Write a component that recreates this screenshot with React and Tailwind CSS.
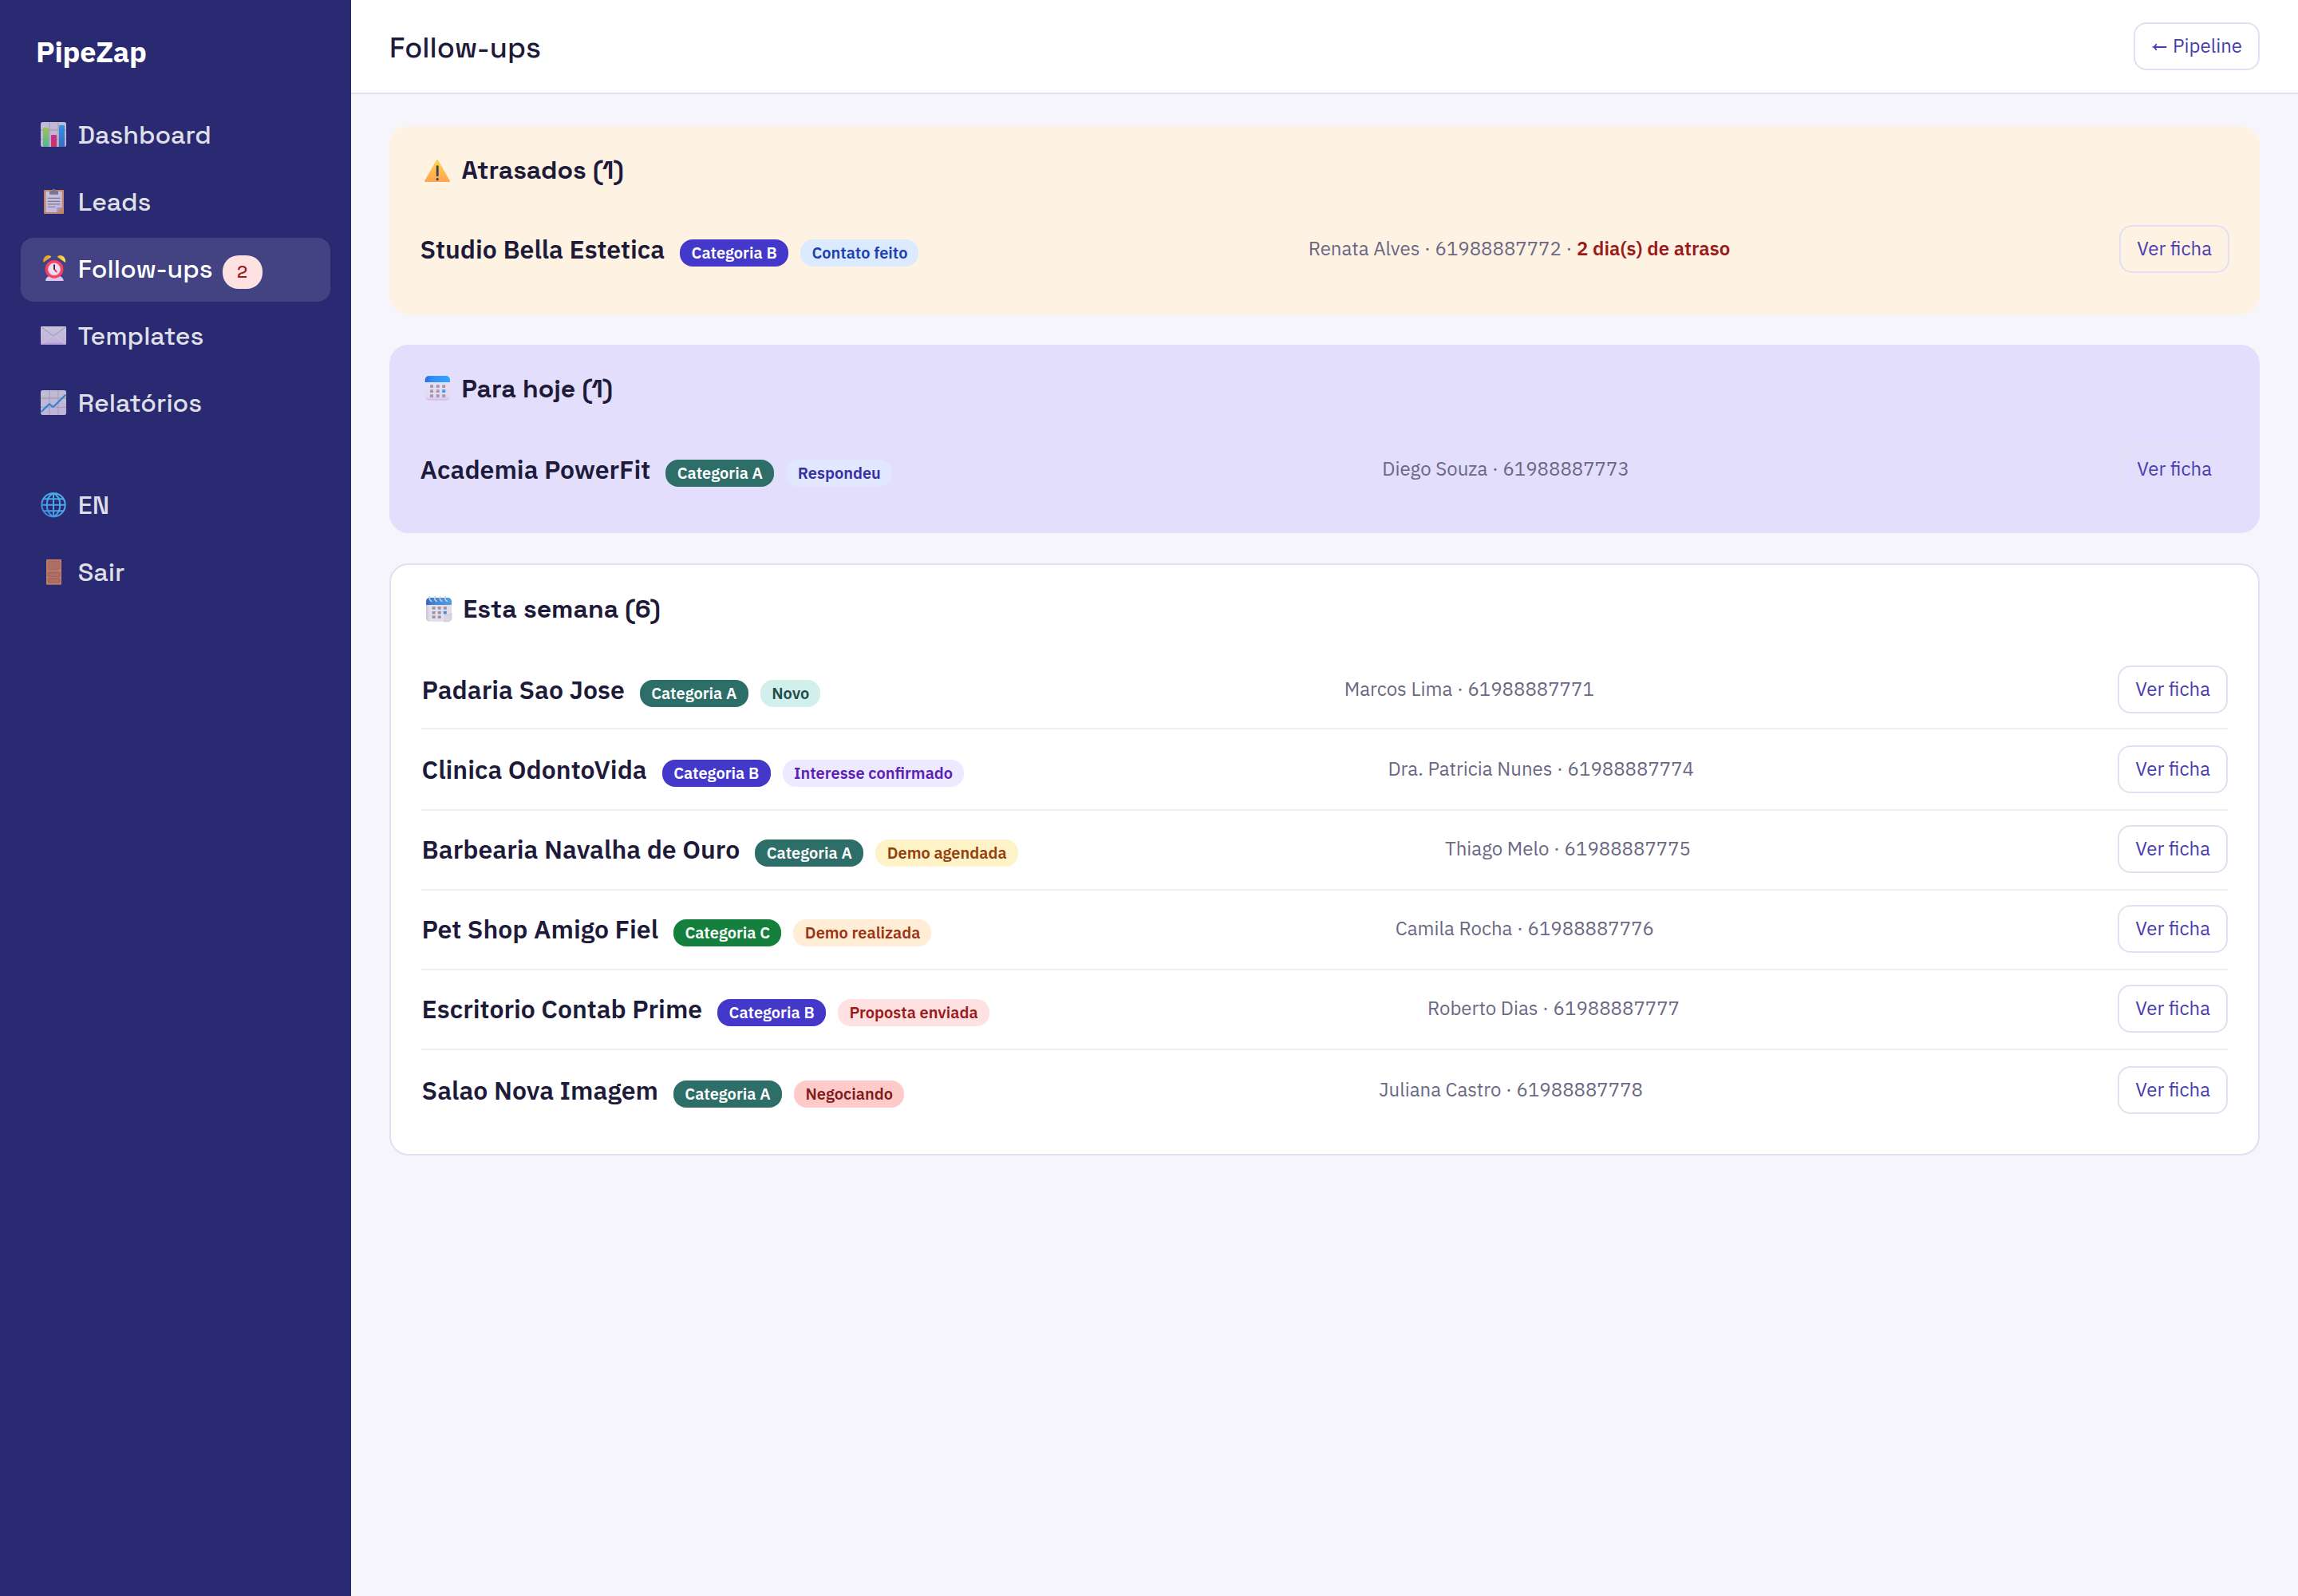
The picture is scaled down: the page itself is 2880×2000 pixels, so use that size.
function Svg({ children }) {
  return (
    <svg viewBox="0 0 32 32" className="size-8 shrink-0 overflow-visible" fill="none">
      {children}
    </svg>
  );
}

function Sheet() {
  return (
    <>
      <defs>
        <linearGradient id="sheet" x1="0" y1="0" x2="0" y2="1">
          <stop offset="0" stopColor="#dcd7e2" />
          <stop offset="1" stopColor="#dccbec" />
        </linearGradient>
      </defs>
      <rect width="32" height="31" rx="2.5" fill="url(#sheet)" />
      <path d="M11 0v31M22 0v31M0 10h32M0 21.300h32" stroke="#bdb5cb" strokeWidth="1.300" />
    </>
  );
}

function BarChartIcon() {
  return (
    <Svg>
      <Sheet />
      <defs>
        <linearGradient id="bar-green" x1="0" y1="0" x2="0" y2="1">
          <stop offset="0" stopColor="#b3dc4e" />
          <stop offset="1" stopColor="#52d39b" />
        </linearGradient>
        <linearGradient id="bar-pink" x1="0" y1="0" x2="0" y2="1">
          <stop offset="0" stopColor="#df2f92" />
          <stop offset="1" stopColor="#e23a63" />
        </linearGradient>
        <linearGradient id="bar-blue" x1="0" y1="0" x2="0" y2="1">
          <stop offset="0" stopColor="#2fa8f6" />
          <stop offset="1" stopColor="#3d78cf" />
        </linearGradient>
      </defs>
      <path d="M3 31V8a1 1 0 0 1 1-1h5a1 1 0 0 1 1 1v23z" fill="url(#bar-green)" />
      <path d="M13 31V17a1 1 0 0 1 1-1h5a1 1 0 0 1 1 1v14z" fill="url(#bar-pink)" />
      <path d="M23 31V5a1 1 0 0 1 1-1h5a1 1 0 0 1 1 1v26z" fill="url(#bar-blue)" />
    </Svg>
  );
}

function ClipboardIcon() {
  return (
    <Svg>
      <defs>
        <linearGradient id="paper" x1="0" y1="0" x2="1" y2="1">
          <stop offset="0" stopColor="#e6e0ee" />
          <stop offset="1" stopColor="#decdf0" />
        </linearGradient>
      </defs>
      <rect x="4" y="1" width="25" height="30" rx="1" fill="#e0976a" />
      <path d="M6.500 3h20.300v20l-6.500 6H6.500z" fill="url(#paper)" />
      <path d="M20.300 29v-5a1 1 0 0 1 1-1h5.500z" fill="#b9a6cd" />
      <path d="M8.800 11.300h15.400M8.800 15.300h15.400M8.800 18.800h15.400" stroke="#8b8599" strokeWidth="1.200" />
      <path d="M8.800 22.300h9.800" stroke="#a9a0b8" strokeWidth="1.600" />
      <path d="M11 3.500a1.500 1.500 0 0 1 1.500-1.500h1.700a2.200 2.200 0 0 1 4.400 0h1.900a1.500 1.500 0 0 1 1.500 1.500v3.300H11z" fill="#8b8394" />
    </Svg>
  );
}

function ClockIcon() {
  return (
    <Svg>
      <defs>
        <linearGradient id="bell-left" x1="0" y1="0" x2="1" y2="0">
          <stop offset="0" stopColor="#d99a2b" />
          <stop offset="1" stopColor="#ffb43c" />
        </linearGradient>
        <linearGradient id="bell-right" x1="0" y1="0" x2="1" y2="0">
          <stop offset="0" stopColor="#f0a52c" />
          <stop offset="1" stopColor="#ffee58" />
        </linearGradient>
        <radialGradient id="dial">
          <stop offset="0" stopColor="#f6eefa" />
          <stop offset="1" stopColor="#e6d2f0" />
        </radialGradient>
      </defs>
      <path d="M6 31c0-3 2.500-6 6-6h10.500c3.500 0 6.200 3 6.200 6z" fill="#dcc6f2" />
      <path d="M3.200 8C2.300 3 5.500-1 9.500-1c2 0 3.300.9 3.800 2z" fill="url(#bell-left)" />
      <path d="M30.800 8c.9-5-2.300-9-6.300-9-2 0-3.300.9-3.800 2z" fill="url(#bell-right)" />
      <circle cx="17" cy="16.300" r="11.400" fill="#f9425f" />
      <circle cx="17" cy="16.300" r="7.900" fill="url(#dial)" />
      <path d="M17 16.500l2.800 3" stroke="#f23a55" strokeWidth="2" strokeLinecap="round" />
      <path d="M17 11.300v4.800" stroke="#3d2c4d" strokeWidth="2" strokeLinecap="round" />
    </Svg>
  );
}

function EnvelopeIcon() {
  return (
    <Svg>
      <defs>
        <linearGradient id="envelope" x1="0" y1="0" x2="0" y2="1">
          <stop offset="0" stopColor="#e4dfe9" />
          <stop offset=".85" stopColor="#dccbf0" />
          <stop offset="1" stopColor="#c9a4ea" />
        </linearGradient>
      </defs>
      <rect y="4" width="32" height="23" rx="1" fill="url(#envelope)" />
      <path d="M1 5l13 9.700c1.200.9 2.400.9 3.600 0L31 5" stroke="#c3aedb" strokeWidth="1.100" />
      <path d="M1 26l12-9.500M31 26l-12-9.500" stroke="#ece6f3" strokeWidth=".8" />
    </Svg>
  );
}

function LineChartIcon() {
  return (
    <Svg>
      <Sheet />
      <path d="M.5 27.200L10 18c.7-.7 1.300-.7 2 0l2.300 2.200c.7.700 1.400.7 2.200 0L31.500 5.500" stroke="#2f95e3" strokeWidth="2.200" strokeLinejoin="round" />
    </Svg>
  );
}

function GlobeIcon() {
  return (
    <Svg>
      <defs>
        <linearGradient id="globe" x1="1" y1="0" x2="0" y2="1">
          <stop offset="0" stopColor="#55c8ff" />
          <stop offset=".6" stopColor="#4db9fb" />
          <stop offset="1" stopColor="#3c8df0" />
        </linearGradient>
      </defs>
      <path
        d="M16 1a14.700 14.700 0 0 1 0 29.400A14.700 14.700 0 0 1 16 1zM16 1c11 5 11 24.400 0 29.400C5 25.400 5 6 16 1zM16 1v29.400M1.300 15.700h29.400M4 8.300h24M4 23.300h24"
        stroke="url(#globe)"
        strokeWidth="2"
      />
    </Svg>
  );
}

function DoorIcon() {
  return (
    <Svg>
      <rect x="7" y="0" width="19" height="31.700" rx="1" fill="#d98a66" />
      <rect x="9.500" y="2" width="14.300" height="11" rx="1.500" fill="#c47a61" stroke="#b56c56" strokeWidth=".6" />
      <rect x="9.500" y="16" width="14.300" height="5.500" rx="1.500" fill="#c47a61" stroke="#a8604e" strokeWidth=".7" />
      <rect x="9.500" y="23.500" width="14.300" height="5.500" rx="1.500" fill="#c47a61" stroke="#a8604e" strokeWidth=".7" />
      <circle cx="23.800" cy="13.600" r="1.100" fill="#f7a823" />
    </Svg>
  );
}

function WarningIcon() {
  return (
    <Svg>
      <defs>
        <linearGradient id="warning" x1="0" y1="0" x2="0" y2="1">
          <stop offset="0" stopColor="#ffd54f" />
          <stop offset="1" stopColor="#ffa352" />
        </linearGradient>
      </defs>
      <path d="M15.100 3.600a1 1 0 0 1 1.800 0l14.900 26a1 1 0 0 1-.9 1.500H1.100a1 1 0 0 1-.9-1.500z" fill="url(#warning)" />
      <path d="M16.200 11.700v11" stroke="#453f4d" strokeWidth="2.900" strokeLinecap="round" />
      <circle cx="16.200" cy="27.600" r="1.700" fill="#453f4d" />
    </Svg>
  );
}

function CalendarIcon() {
  return (
    <Svg>
      <defs>
        <linearGradient id="cal-body" x1="0" y1="0" x2="0" y2="1">
          <stop offset="0" stopColor="#e9e1f0" />
          <stop offset=".85" stopColor="#e6d8f1" />
          <stop offset="1" stopColor="#d5b8e8" />
        </linearGradient>
        <linearGradient id="cal-head" x1="0" y1="0" x2="1" y2="0">
          <stop offset="0" stopColor="#2a66dc" />
          <stop offset=".25" stopColor="#2f8ff8" />
          <stop offset="1" stopColor="#31a5ff" />
        </linearGradient>
      </defs>
      <rect x=".7" y="0" width="31.300" height="30.700" rx="5" fill="url(#cal-body)" />
      <path d="M.7 8V5a5 5 0 0 1 5-5H27a5 5 0 0 1 5 5v3z" fill="url(#cal-head)" />
      <path
        d="M7 11.200h4v3.700H7zM14.700 11.200h4v3.700h-4zM22.200 11.200h4v3.700h-4zM7 17.200h4v3.700H7zM14.700 17.200h4v3.700h-4zM7 23.200h4v3.700H7zM14.700 23.200h4v3.700h-4zM22.200 23.200h4v3.700h-4z"
        fill="#a29baf"
      />
      <path d="M22.200 17.200h4v3.700h-4z" fill="#2f9dfb" />
    </Svg>
  );
}

function SpiralCalendarIcon() {
  return (
    <Svg>
      <defs>
        <linearGradient id="spiral-body" x1="0" y1="0" x2="1" y2="0">
          <stop offset="0" stopColor="#c9c2d6" />
          <stop offset=".15" stopColor="#e6e0ec" />
          <stop offset="1" stopColor="#e3dce9" />
        </linearGradient>
        <linearGradient id="spiral-head" x1="0" y1="0" x2="1" y2="0">
          <stop offset="0" stopColor="#3b63bd" />
          <stop offset=".25" stopColor="#3f83d6" />
          <stop offset="1" stopColor="#4f9fe0" />
        </linearGradient>
      </defs>
      <path d="M0 6.500A4.500 4.500 0 0 1 4.500 2h23A4.500 4.500 0 0 1 32 6.500V21l-9.500 11h-18A4.500 4.500 0 0 1 0 27.500z" fill="url(#spiral-body)" />
      <path d="M22.500 32c1.500-3 1.500-6 1-8.500 3.500.5 6.500-.5 8.500-2.500v6.500a4.500 4.500 0 0 1-4.500 4.500z" fill="#dcd5e4" stroke="#c3bbd0" strokeWidth=".6" />
      <path d="M0 11V6.500A4.500 4.500 0 0 1 4.500 2h23A4.500 4.500 0 0 1 32 6.500V11z" fill="url(#spiral-head)" />
      <path d="M4.800.5c-1.500 2.500 0 5 2 6M11.300.5c-1.500 2.500 0 5 2 6M17.800.5c-1.500 2.500 0 5 2 6M24.300.5c-1.500 2.500 0 5 2 6" stroke="#d5cfdc" strokeWidth="1.600" strokeLinecap="round" />
      <path
        d="M7.600 13.200h4v3.500h-4zM14.700 13.200h4v3.500h-4zM21.800 13.200h4v3.500h-4zM7.600 18.900h4v3.500h-4zM14.700 18.900h4v3.500h-4zM7.600 24.600h4v3.500h-4zM14.700 24.600h4v3.500h-4z"
        fill="#9a94a8"
      />
      <path d="M21.800 18.900h4v3.500h-4z" fill="#3f8fe0" />
    </Svg>
  );
}

function BackArrow() {
  return (
    <svg viewBox="0 0 27 10" className="mt-[3px] h-[10px] w-[27px]" fill="none" stroke="currentColor" strokeWidth="1.800">
      <path d="M19.300 5H3.500M6.600 1.200C5.800 3 4.700 4.300 3 5c1.700.7 2.800 2 3.600 3.800" />
    </svg>
  );
}

const NAV = [
  { icon: BarChartIcon, label: "Dashboard" },
  { icon: ClipboardIcon, label: "Leads" },
  { icon: ClockIcon, label: "Follow-ups", count: 2, active: true },
  { icon: EnvelopeIcon, label: "Templates" },
  { icon: LineChartIcon, label: "Relatórios" },
];

const NAV_FOOTER = [
  { icon: GlobeIcon, label: "EN" },
  { icon: DoorIcon, label: "Sair" },
];

const CATEGORY = {
  A: "bg-[#2d6e69]",
  B: "bg-[#4338ca]",
  C: "bg-[#15803d]",
};

const STATUS = {
  "Novo": "bg-[#d1efeb] text-[#1f4d49]",
  "Contato feito": "bg-[#dbeafe] text-[#1e40af]",
  "Respondeu": "bg-[#e0e7ff] text-[#3730a3]",
  "Interesse confirmado": "bg-[#ede9fe] text-[#5b21b6]",
  "Demo agendada": "bg-[#fef3c7] text-[#92400e]",
  "Demo realizada": "bg-[#ffedd5] text-[#9a3412]",
  "Proposta enviada": "bg-[#fee2e2] text-[#991b1b]",
  "Negociando": "bg-[#fecaca] text-[#7f1d1d]",
};

const overdue = { name: "Studio Bella Estetica", category: "B", status: "Contato feito", contact: "Renata Alves", phone: "61988887772", late: 2 };

const today = { name: "Academia PowerFit", category: "A", status: "Respondeu", contact: "Diego Souza", phone: "61988887773" };

const week = [
  { name: "Padaria Sao Jose", category: "A", status: "Novo", contact: "Marcos Lima", phone: "61988887771" },
  { name: "Clinica OdontoVida", category: "B", status: "Interesse confirmado", contact: "Dra. Patricia Nunes", phone: "61988887774" },
  { name: "Barbearia Navalha de Ouro", category: "A", status: "Demo agendada", contact: "Thiago Melo", phone: "61988887775" },
  { name: "Pet Shop Amigo Fiel", category: "C", status: "Demo realizada", contact: "Camila Rocha", phone: "61988887776" },
  { name: "Escritorio Contab Prime", category: "B", status: "Proposta enviada", contact: "Roberto Dias", phone: "61988887777" },
  { name: "Salao Nova Imagem", category: "A", status: "Negociando", contact: "Juliana Castro", phone: "61988887778" },
];

function NavItem({ icon: Icon, label, count, active }) {
  return (
    <a
      className={`flex h-20 items-center rounded-[16px] px-[25px] pb-[2px] font-['Space_Grotesk','Inter',sans-serif] text-[32px] font-medium text-white ${
        active ? "bg-white/12" : "opacity-85"
      }`}
    >
      <Icon />
      <span className="ml-[14.8px] leading-10">{label}</span>
      {count && (
        <span className="mt-2 ml-3 flex h-[42px] w-[50px] items-center justify-center rounded-[20px] bg-[#fee2e2] pb-[1px] text-[22px] text-[#991b1b]">
          {count}
        </span>
      )}
    </a>
  );
}

function Button({ children }) {
  return (
    <button className="flex h-[60px] items-center rounded-[16px] border-2 border-[#e2e0f0] px-5 pb-[2px] text-2xl whitespace-nowrap text-[#4a3db0]">
      {children}
    </button>
  );
}

function LeadRow({ lead, className = "" }) {
  return (
    <div className={`flex items-start justify-between ${className}`}>
      <div className="flex h-[60px] items-baseline pt-[6px] whitespace-nowrap">
        <span className="pl-[0.6px] text-[32px] leading-[48px] font-semibold">{lead.name}</span>
        <span className={`ml-[19px] h-[34px] rounded-[16px] px-[14.4px] text-xl leading-[34px] font-semibold text-white ${CATEGORY[lead.category]}`}>
          Categoria {lead.category}
        </span>
        <span className={`ml-[15px] h-[34px] rounded-[16px] pr-[14px] pl-[14.4px] text-xl leading-[34px] font-semibold ${STATUS[lead.status]}`}>
          {lead.status}
        </span>
      </div>
      <div className="text-2xl leading-[58px] whitespace-nowrap text-[#6b6884]">
        {lead.contact} · {lead.phone}
        {lead.late && (
          <>
            {" · "}
            <strong className="font-semibold text-[#991b1b]">{lead.late} dia(s) de atraso</strong>
          </>
        )}
      </div>
      <Button>Ver ficha</Button>
    </div>
  );
}

function CardTitle({ icon: Icon, children }) {
  return (
    <h2 className="flex h-10 items-center gap-[14.5px] pl-[6px] font-['Space_Grotesk','Inter',sans-serif] text-[32px] leading-10 font-semibold">
      <Icon />
      {children}
    </h2>
  );
}

export default function App() {
  return (
    <div className="flex h-[2000px] w-[2880px] overflow-hidden bg-[#f6f5fb] font-['IBM_Plex_Sans','Roboto',sans-serif] text-[#1e1b3a]">
      <aside className="w-[440px] shrink-0 bg-[#2a2a72] px-[26px] pt-11">
        <div className="pl-[19px] text-[36px] leading-[42px] font-bold tracking-[-0.005em] text-white">PipeZap</div>
        <nav className="mt-11 flex flex-col gap-1">
          {NAV.map((item) => <NavItem key={item.label} {...item} />)}
        </nav>
        <nav className="mt-12 flex flex-col gap-1">
          {NAV_FOOTER.map((item) => <NavItem key={item.label} {...item} />)}
        </nav>
      </aside>

      <main className="flex-1">
        <header className="flex h-[118px] items-center justify-between border-b-2 border-[#e2e0f0] bg-white px-12">
          <h1 className="pt-[3px] font-['Space_Grotesk','Inter',sans-serif] text-[36px] font-medium">Follow-ups</h1>
          <Button>
            <BackArrow />
            Pipeline
          </Button>
        </header>

        <div className="flex flex-col gap-[38px] px-12 pt-10">
          <section className="h-[236px] rounded-3xl bg-[#fef2e2] px-[38px] pt-[35px]">
            <CardTitle icon={WarningIcon}>Atrasados (1)</CardTitle>
            <LeadRow lead={overdue} className="mt-[49px]" />
          </section>

          <section className="h-[236px] rounded-3xl bg-[#e2defc] px-[38px] pt-[35px]">
            <CardTitle icon={CalendarIcon}>Para hoje (1)</CardTitle>
            <LeadRow lead={today} className="mt-[51px]" />
          </section>

          <section className="h-[742px] rounded-3xl border-2 border-[#e2e0f0] bg-white px-[38px] pt-[35px]">
            <CardTitle icon={SpiralCalendarIcon}>Esta semana (6)</CardTitle>
            <div className="mt-[31px]">
              {week.map((lead) => (
                <LeadRow
                  key={lead.name}
                  lead={lead}
                  className="h-[100px] border-b-2 border-[#efeff0] pt-[18px] first:pt-5 last:border-b-0 last:pt-5 nth-2:h-[102px] nth-2:pt-5"
                />
              ))}
            </div>
          </section>
        </div>
      </main>
    </div>
  );
}
